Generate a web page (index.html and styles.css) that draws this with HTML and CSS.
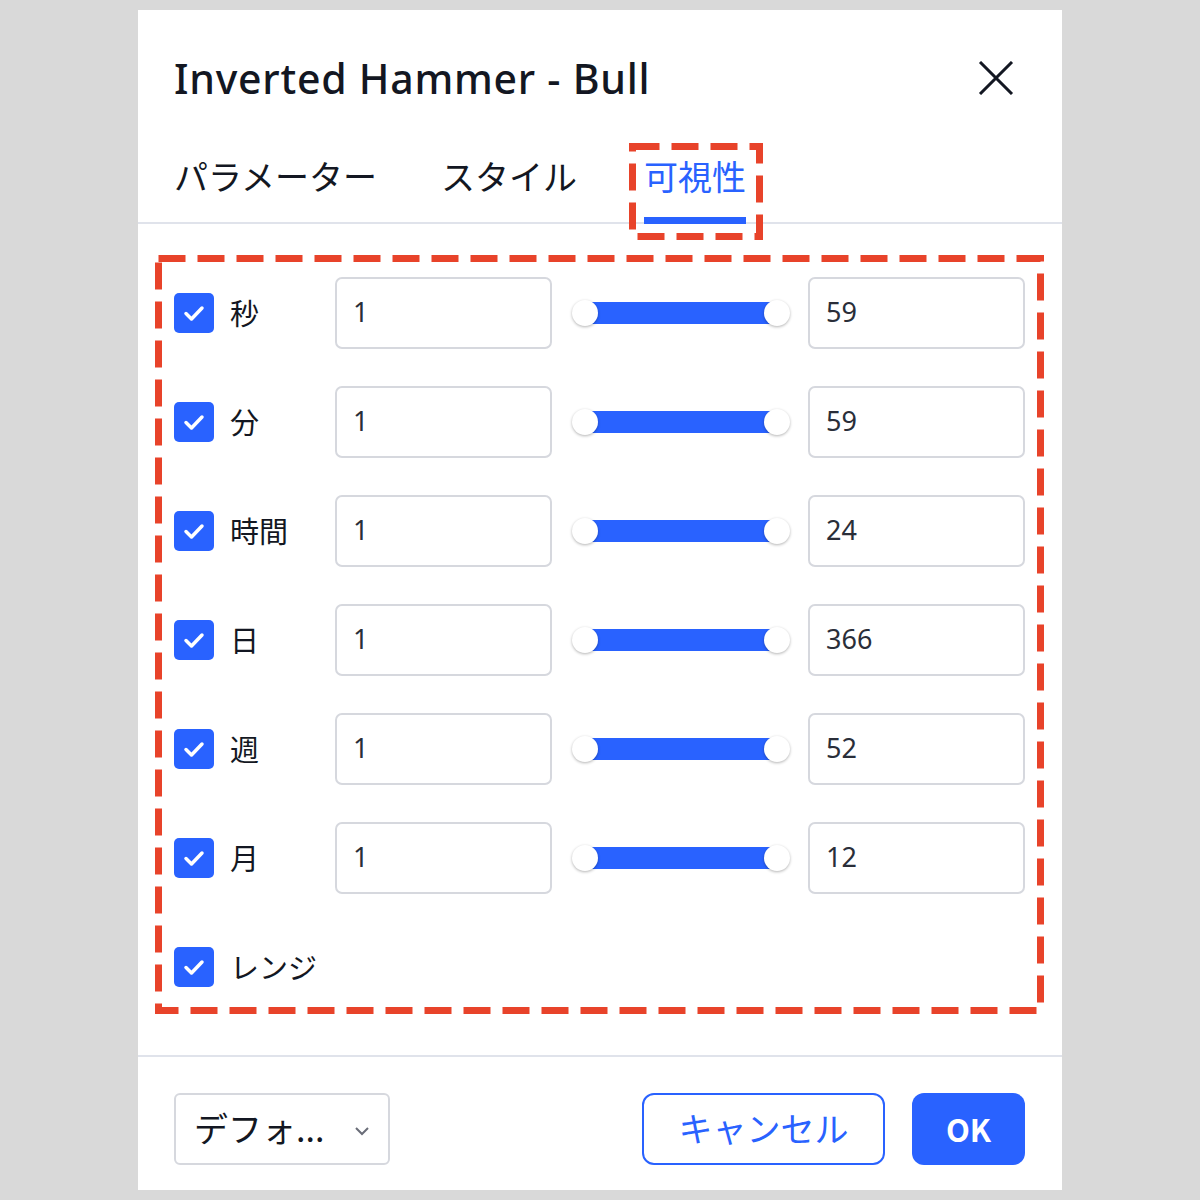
FILE: index.html
```html
<!DOCTYPE html>
<html lang="ja">
<head>
<meta charset="utf-8">
<title>Inverted Hammer - Bull</title>
<link rel="stylesheet" href="styles.css">
</head>
<body>
<div class="dialog">
  <div class="header">
    <div class="title">Inverted Hammer - Bull</div>
    <svg class="close" width="36" height="34" viewBox="0 0 36 34"><path d="M2 1 L34 33 M34 1 L2 33" stroke="#131722" stroke-width="3" fill="none"/></svg>
  </div>
  <div class="tabs">
    <div class="tab">パラメーター</div>
    <div class="tab">スタイル</div>
    <div class="tab active">可視性
      <svg class="mark mark-tab" width="134" height="97" viewBox="0 0 134 97"><rect x="3.5" y="3.5" width="127" height="90" fill="none" stroke="#e8432a" stroke-width="7" stroke-dasharray="27 12"/></svg>
    </div>
  </div>
  <div class="content">
    <svg class="mark mark-content" width="889" height="759" viewBox="0 0 889 759"><rect x="3.5" y="3.5" width="882" height="752" fill="none" stroke="#e8432a" stroke-width="7" stroke-dasharray="27 12"/></svg>
    <div class="row">
      <span class="check"><svg width="40" height="40" viewBox="0 0 40 40"><path d="M12 20.5 L17.5 26 L28 15" stroke="#fff" stroke-width="3.5" fill="none" stroke-linecap="round" stroke-linejoin="round"/></svg></span>
      <span class="label">秒</span>
      <div class="field">1</div>
      <div class="slider"><div class="track"></div><span class="knob"></span><span class="knob"></span></div>
      <div class="field">59</div>
    </div>
    <div class="row">
      <span class="check"><svg width="40" height="40" viewBox="0 0 40 40"><path d="M12 20.5 L17.5 26 L28 15" stroke="#fff" stroke-width="3.5" fill="none" stroke-linecap="round" stroke-linejoin="round"/></svg></span>
      <span class="label">分</span>
      <div class="field">1</div>
      <div class="slider"><div class="track"></div><span class="knob"></span><span class="knob"></span></div>
      <div class="field">59</div>
    </div>
    <div class="row">
      <span class="check"><svg width="40" height="40" viewBox="0 0 40 40"><path d="M12 20.5 L17.5 26 L28 15" stroke="#fff" stroke-width="3.5" fill="none" stroke-linecap="round" stroke-linejoin="round"/></svg></span>
      <span class="label">時間</span>
      <div class="field">1</div>
      <div class="slider"><div class="track"></div><span class="knob"></span><span class="knob"></span></div>
      <div class="field">24</div>
    </div>
    <div class="row">
      <span class="check"><svg width="40" height="40" viewBox="0 0 40 40"><path d="M12 20.5 L17.5 26 L28 15" stroke="#fff" stroke-width="3.5" fill="none" stroke-linecap="round" stroke-linejoin="round"/></svg></span>
      <span class="label">日</span>
      <div class="field">1</div>
      <div class="slider"><div class="track"></div><span class="knob"></span><span class="knob"></span></div>
      <div class="field">366</div>
    </div>
    <div class="row">
      <span class="check"><svg width="40" height="40" viewBox="0 0 40 40"><path d="M12 20.5 L17.5 26 L28 15" stroke="#fff" stroke-width="3.5" fill="none" stroke-linecap="round" stroke-linejoin="round"/></svg></span>
      <span class="label">週</span>
      <div class="field">1</div>
      <div class="slider"><div class="track"></div><span class="knob"></span><span class="knob"></span></div>
      <div class="field">52</div>
    </div>
    <div class="row">
      <span class="check"><svg width="40" height="40" viewBox="0 0 40 40"><path d="M12 20.5 L17.5 26 L28 15" stroke="#fff" stroke-width="3.5" fill="none" stroke-linecap="round" stroke-linejoin="round"/></svg></span>
      <span class="label">月</span>
      <div class="field">1</div>
      <div class="slider"><div class="track"></div><span class="knob"></span><span class="knob"></span></div>
      <div class="field">12</div>
    </div>
    <div class="row">
      <span class="check"><svg width="40" height="40" viewBox="0 0 40 40"><path d="M12 20.5 L17.5 26 L28 15" stroke="#fff" stroke-width="3.5" fill="none" stroke-linecap="round" stroke-linejoin="round"/></svg></span>
      <span class="label label-wide">レンジ</span>
    </div>
  </div>
  <div class="footer">
    <div class="select"><span>デフォ...</span><svg width="16" height="10" viewBox="0 0 16 10"><path d="M2 2 L8 8 L14 2" stroke="#6a6d78" stroke-width="2" fill="none"/></svg></div>
    <div class="spacer"></div>
    <div class="btn btn-cancel">キャンセル</div>
    <div class="btn btn-ok">OK</div>
  </div>
</div>
</body>
</html>
```
FILE: styles.css
```css
* { box-sizing: border-box; }
html, body { margin: 0; padding: 0; }
body {
  background: #d9d9d9;
  width: 1200px;
  height: 1200px;
  font-family: "Noto Sans", "Noto Sans CJK JP", sans-serif;
  color: #131722;
}
.dialog {
  margin: 10px 0 0 138px;
  width: 924px;
  height: 1180px;
  background: #fff;
  display: flex;
  flex-direction: column;
}
.header {
  display: flex;
  align-items: center;
  justify-content: space-between;
  padding: 44px 48px 0 36px;
}
.title {
  font-size: 41px;
  font-weight: 500;
  line-height: 48px;
  letter-spacing: 0.75px;
}
.close { display: block; }
.tabs {
  margin-top: 54px;
  display: flex;
  gap: 64px;
  padding-left: 36px;
  border-bottom: 2px solid #e0e3eb;
}
.tab {
  position: relative;
  font-family: "Noto Sans CJK JP", sans-serif;
  font-size: 34px;
  line-height: 40px;
  padding-bottom: 21px;
  border-bottom: 7px solid transparent;
  margin-bottom: -2px;
  color: #131722;
}
.tab.active {
  color: #2962ff;
  border-bottom-color: #2962ff;
  margin-left: 3px;
}
.mark { position: absolute; display: block; pointer-events: none; }
.mark-tab { left: -15px; top: -13px; }
.content {
  position: relative;
  padding: 53px 37px 52px 36px;
  display: flex;
  flex-direction: column;
  gap: 37px;
  border-bottom: 2px solid #e0e3eb;
}
.mark-content { left: 17px; top: 31px; }
.row {
  display: grid;
  grid-template-columns: 40px 89px 217px 1fr 217px;
  column-gap: 16px;
  align-items: center;
  height: 72px;
}
.check {
  width: 40px;
  height: 40px;
  border-radius: 5px;
  background: #2962ff;
  display: block;
}
.check svg { display: block; }
.label {
  font-family: "Noto Sans CJK JP", sans-serif;
  font-size: 29px;
  line-height: 40px;
  color: #131722;
  white-space: nowrap;
  margin-top: -3px;
}
.label-wide { grid-column: 2 / 4; }
.field {
  height: 72px;
  border: 2px solid #d6d8de;
  border-radius: 7px;
  padding-left: 16px;
  font-size: 27px;
  line-height: 66px;
  color: #2a2e39;
}
.slider {
  position: relative;
  height: 26px;
  margin: 0 2px 0 4px;
}
.track {
  position: absolute;
  left: 13px;
  right: 13px;
  top: 2px;
  height: 22px;
  background: #2962ff;
}
.knob {
  position: absolute;
  top: 0;
  width: 26px;
  height: 26px;
  border-radius: 50%;
  background: #fff;
  box-shadow: 0 1px 3px rgba(0,0,0,0.3);
}
.knob:first-of-type { left: 0; }
.knob:last-of-type { right: 0; }
.footer {
  display: flex;
  align-items: center;
  padding: 36px 37px 0 36px;
}
.select {
  width: 216px;
  height: 72px;
  border: 2px solid #d6d8de;
  border-radius: 6px;
  display: flex;
  align-items: center;
  justify-content: space-between;
  padding: 0 18px 0 18px;
  font-family: "Noto Sans CJK JP", sans-serif;
  font-size: 34px;
  color: #131722;
}
.select span { margin-top: -4px; }
.select svg { display: block; margin-top: 4px; }
.spacer { flex: 1; }
.btn {
  height: 72px;
  border-radius: 12px;
  display: flex;
  align-items: center;
  justify-content: center;
  font-family: "Noto Sans CJK JP", sans-serif;
  font-size: 34px;
  padding-bottom: 4px;
}
.btn-cancel {
  width: 243px;
  border: 2px solid #2962ff;
  color: #2962ff;
  margin-right: 27px;
}
.btn-ok {
  width: 113px;
  background: #2962ff;
  color: #fff;
  font-weight: 700;
  font-size: 31px;
  padding-bottom: 2px;
}
```
